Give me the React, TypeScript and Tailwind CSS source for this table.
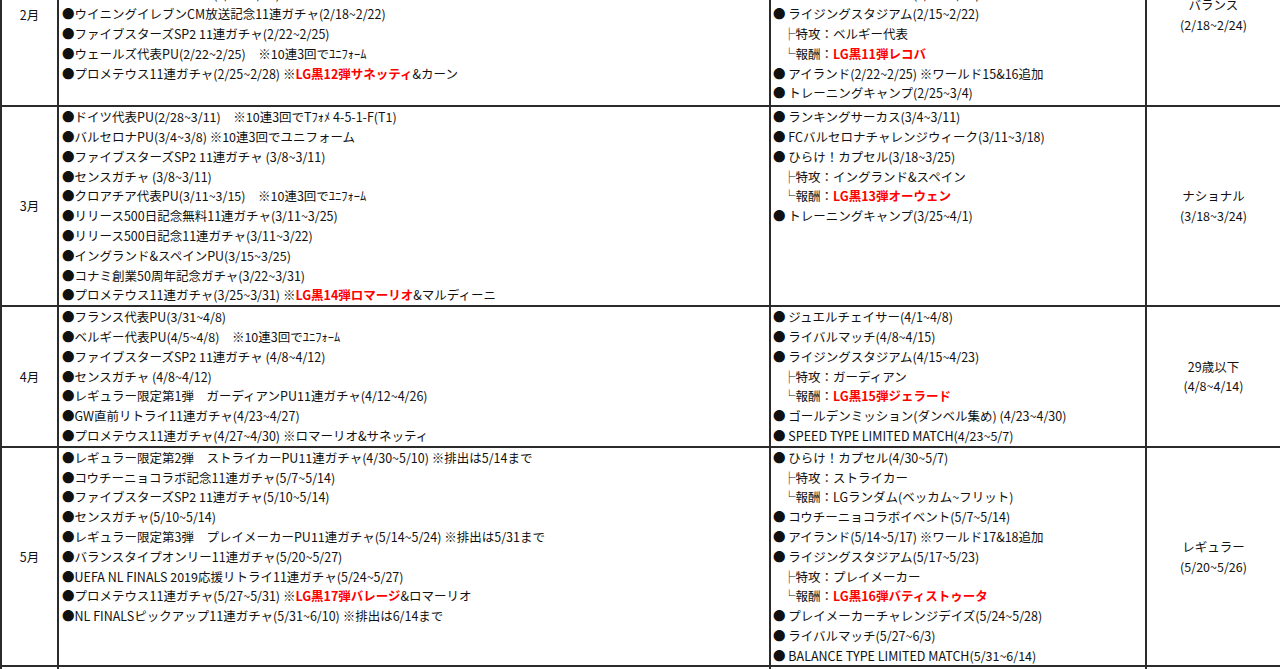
type Row = {
  month: string;
  gacha: string[];
  events: string[];
  special: [string, string];
};

// [text] = red part, "> " = sub line (├), "/ " = last sub line (└)
const rows: Row[] = [
  {
    month: "2月",
    gacha: [
      "ファイブスターズSP2 11連ガチャ(2/1~2/4)",
      "センスガチャ(2/1~2/4)",
      "スペイン代表PU(2/8~2/11)　※10連3回でﾕﾆﾌｫｰﾑ",
      "プロメテウス11連ガチャ(2/11~2/18)",
      "ウイニングイレブンCM放送記念11連ガチャ(2/18~2/22)",
      "ファイブスターズSP2 11連ガチャ(2/22~2/25)",
      "ウェールズ代表PU(2/22~2/25)　※10連3回でﾕﾆﾌｫｰﾑ",
      "プロメテウス11連ガチャ(2/25~2/28) ※[LG黒12弾サネッティ]&カーン",
    ],
    events: [
      "ジュエルチェイサー(2/1~2/8)",
      "ライバルマッチ(2/4~2/11)",
      "ゴールデンミッション(2/8~2/15)",
      "トレーニングキャンプ(2/11~2/18)",
      "ライジングスタジアム(2/15~2/22)",
      "> 特攻：ベルギー代表",
      "/ 報酬：[LG黒11弾レコバ]",
      "アイランド(2/22~2/25) ※ワールド15&16追加",
      "トレーニングキャンプ(2/25~3/4)",
    ],
    special: ["バランス", "(2/18~2/24)"],
  },
  {
    month: "3月",
    gacha: [
      "ドイツ代表PU(2/28~3/11)　※10連3回でTﾌｫﾒ 4-5-1-F(T1)",
      "バルセロナPU(3/4~3/8) ※10連3回でユニフォーム",
      "ファイブスターズSP2 11連ガチャ (3/8~3/11)",
      "センスガチャ (3/8~3/11)",
      "クロアチア代表PU(3/11~3/15)　※10連3回でﾕﾆﾌｫｰﾑ",
      "リリース500日記念無料11連ガチャ(3/11~3/25)",
      "リリース500日記念11連ガチャ(3/11~3/22)",
      "イングランド&スペインPU(3/15~3/25)",
      "コナミ創業50周年記念ガチャ(3/22~3/31)",
      "プロメテウス11連ガチャ(3/25~3/31) ※[LG黒14弾ロマーリオ]&マルディーニ",
    ],
    events: [
      "ランキングサーカス(3/4~3/11)",
      "FCバルセロナチャレンジウィーク(3/11~3/18)",
      "ひらけ！カプセル(3/18~3/25)",
      "> 特攻：イングランド&スペイン",
      "/ 報酬：[LG黒13弾オーウェン]",
      "トレーニングキャンプ(3/25~4/1)",
    ],
    special: ["ナショナル", "(3/18~3/24)"],
  },
  {
    month: "4月",
    gacha: [
      "フランス代表PU(3/31~4/8)",
      "ベルギー代表PU(4/5~4/8)　※10連3回でﾕﾆﾌｫｰﾑ",
      "ファイブスターズSP2 11連ガチャ (4/8~4/12)",
      "センスガチャ (4/8~4/12)",
      "レギュラー限定第1弾　ガーディアンPU11連ガチャ(4/12~4/26)",
      "GW直前リトライ11連ガチャ(4/23~4/27)",
      "プロメテウス11連ガチャ(4/27~4/30) ※ロマーリオ&サネッティ",
    ],
    events: [
      "ジュエルチェイサー(4/1~4/8)",
      "ライバルマッチ(4/8~4/15)",
      "ライジングスタジアム(4/15~4/23)",
      "> 特攻：ガーディアン",
      "/ 報酬：[LG黒15弾ジェラード]",
      "ゴールデンミッション(ダンベル集め) (4/23~4/30)",
      "SPEED TYPE LIMITED MATCH(4/23~5/7)",
    ],
    special: ["29歳以下", "(4/8~4/14)"],
  },
  {
    month: "5月",
    gacha: [
      "レギュラー限定第2弾　ストライカーPU11連ガチャ(4/30~5/10) ※排出は5/14まで",
      "コウチーニョコラボ記念11連ガチャ(5/7~5/14)",
      "ファイブスターズSP2 11連ガチャ(5/10~5/14)",
      "センスガチャ(5/10~5/14)",
      "レギュラー限定第3弾　プレイメーカーPU11連ガチャ(5/14~5/24) ※排出は5/31まで",
      "バランスタイプオンリー11連ガチャ(5/20~5/27)",
      "UEFA NL FINALS 2019応援リトライ11連ガチャ(5/24~5/27)",
      "プロメテウス11連ガチャ(5/27~5/31) ※[LG黒17弾バレージ]&ロマーリオ",
      "NL FINALSピックアップ11連ガチャ(5/31~6/10) ※排出は6/14まで",
    ],
    events: [
      "ひらけ！カプセル(4/30~5/7)",
      "> 特攻：ストライカー",
      "/ 報酬：LGランダム(ベッカム~フリット)",
      "コウチーニョコラボイベント(5/7~5/14)",
      "アイランド(5/14~5/17) ※ワールド17&18追加",
      "ライジングスタジアム(5/17~5/23)",
      "> 特攻：プレイメーカー",
      "/ 報酬：[LG黒16弾バティストゥータ]",
      "プレイメーカーチャレンジデイズ(5/24~5/28)",
      "ライバルマッチ(5/27~6/3)",
      "BALANCE TYPE LIMITED MATCH(5/31~6/14)",
    ],
    special: ["レギュラー", "(5/20~5/26)"],
  },
  {
    month: "6月",
    gacha: [
      "ファイブスターズSP2 11連ガチャ(6/10~6/14)",
      "センスガチャ(6/10~6/14)",
    ],
    events: ["ランキングサーカス(6/3~6/10)", "ライバルマッチ(6/10~6/17)"],
    special: ["ドリブル", "(6/10~6/16)"],
  },
];

function Rich({ text }: { text: string }) {
  const parts = text.split(/(\[[^\]]+\])/);
  return (
    <>
      {parts.map((p, i) =>
        p.startsWith("[") ? (
          <span key={i} className="font-bold text-[#ff0000]">
            {p.slice(1, -1)}
          </span>
        ) : (
          <span key={i}>{p}</span>
        ),
      )}
    </>
  );
}

function EventLine({ text }: { text: string }) {
  if (text.startsWith("> ") || text.startsWith("/ ")) {
    const mark = text.startsWith("> ") ? "├" : "└";
    return (
      <div className="whitespace-nowrap pl-[10px]">
        {mark}
        <Rich text={text.slice(2)} />
      </div>
    );
  }
  return (
    <div className="whitespace-nowrap">
      ●&nbsp;
      <Rich text={text} />
    </div>
  );
}

export default function App() {
  return (
    <div className="h-[669px] w-full overflow-hidden bg-white">
      <table className="-mt-[77px] w-[1290px] table-fixed border-collapse font-['Noto_Sans_CJK_JP','Noto_Sans',sans-serif] text-[12.5px] leading-[19.8px] text-[#111]">
        <colgroup>
          <col className="w-[57px]" />
          <col className="w-[712px]" />
          <col className="w-[376px]" />
          <col className="w-[145px]" />
        </colgroup>
        <tbody>
          {rows.map((row, r) => (
            <tr key={row.month}>
              <td className="border-2 border-[#2b2b2b] text-center align-middle">
                {row.month}
              </td>
              <td className="border-2 border-[#2b2b2b] pl-[3px] align-top">
                {row.gacha.map((g, i) => (
                  <div key={i} className="whitespace-nowrap">
                    ●<Rich text={g} />
                  </div>
                ))}
              </td>
              <td
                className={
                  r === 0
                    ? "border-2 border-[#2b2b2b] pb-[2px] pl-[2px] align-top"
                    : "border-2 border-[#2b2b2b] pl-[2px] align-top"
                }
              >
                {row.events.map((e, i) => (
                  <EventLine key={i} text={e} />
                ))}
              </td>
              <td className="border-2 border-[#2b2b2b] pr-[10px] text-center align-middle">
                <div>{row.special[0]}</div>
                <div>{row.special[1]}</div>
              </td>
            </tr>
          ))}
        </tbody>
      </table>
    </div>
  );
}
